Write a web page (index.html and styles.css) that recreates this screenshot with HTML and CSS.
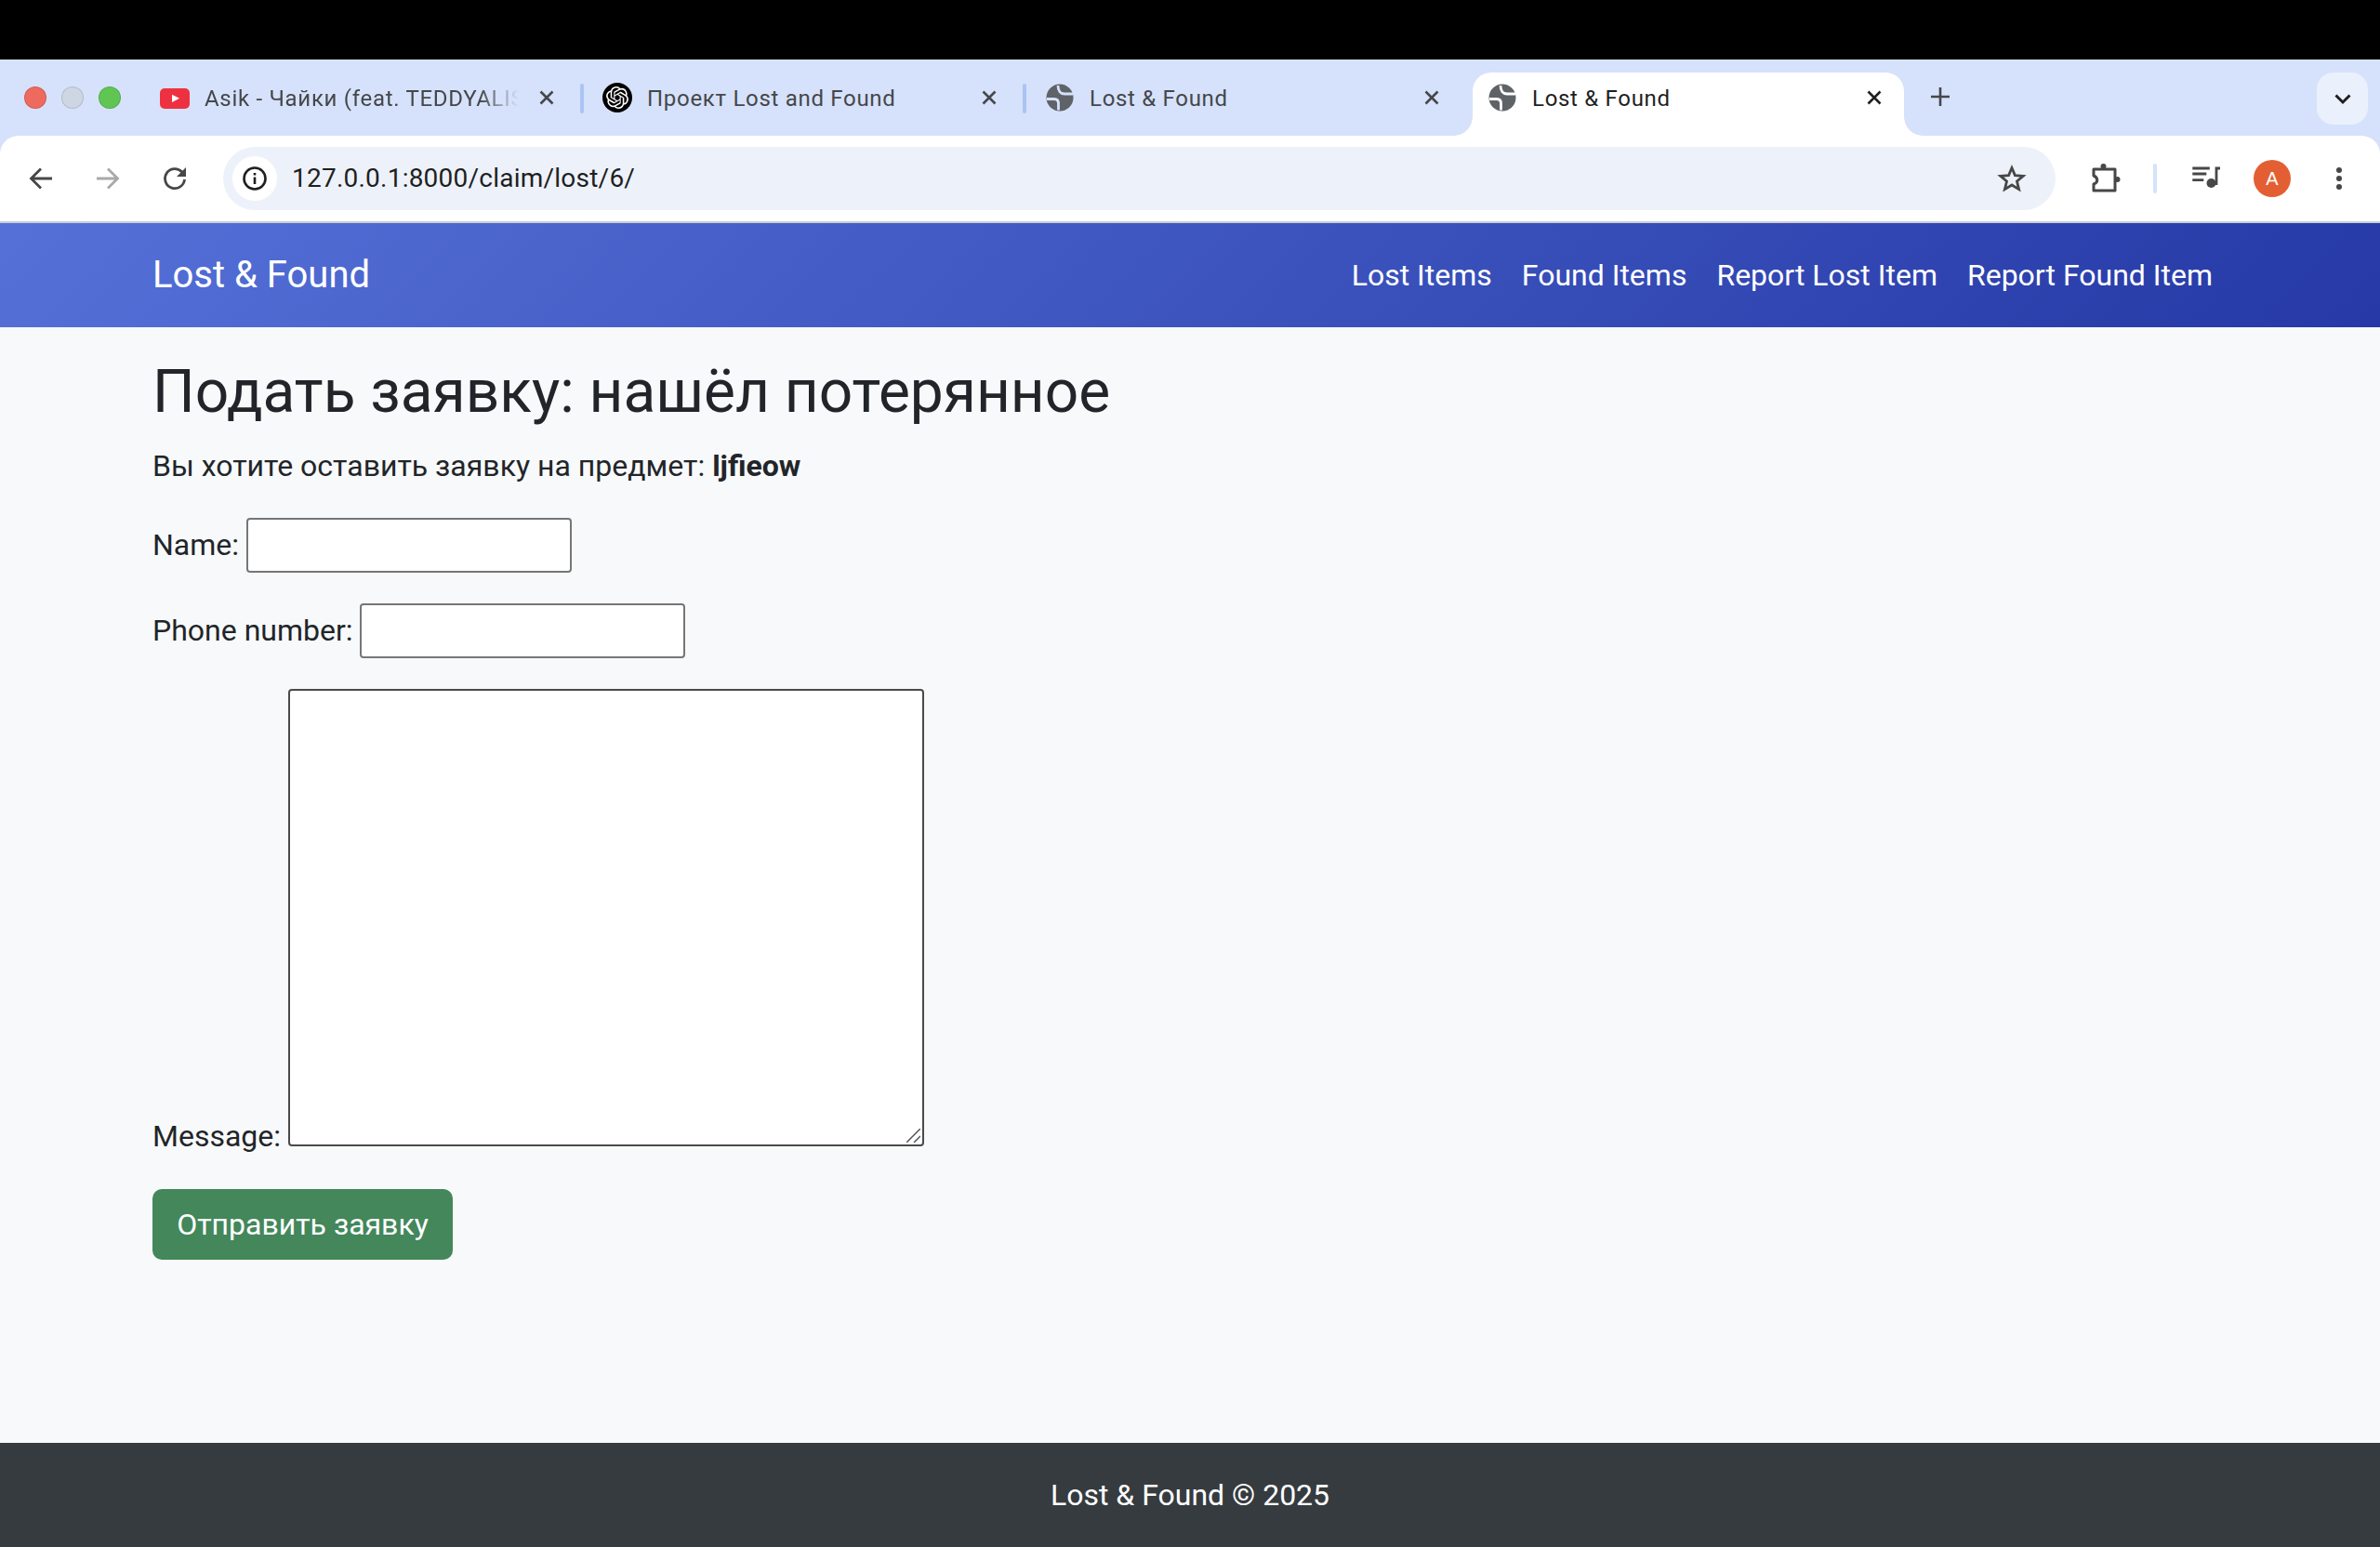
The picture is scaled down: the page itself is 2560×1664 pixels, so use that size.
FILE: index.html
```html
<!DOCTYPE html>
<html>
<head>
  <title>Lost &amp; Found</title>
  <link rel="stylesheet" href="styles.css">
</head>
<body>
  <div class="top-black"></div>

  <div class="browser">
    <!-- Browser tab strip -->
    <div class="tabstrip">
      <div class="traffic">
        <span class="light light-red"></span>
        <span class="light light-grey"></span>
        <span class="light light-green"></span>
      </div>
      <div class="tab">
        <svg class="favicon" viewBox="0 0 32 32"><rect x="0" y="6" width="32" height="22" rx="5" fill="#ee3140"/><path d="M13 12.700v8.300l8-4.150z" fill="#fff"/></svg>
        <span class="tab-title tab-title-fade">Asik - Чайки (feat. TEDDYALIS</span>
        <svg class="tab-close" viewBox="0 0 32 32"><path d="M9.500 9.500l13 13M22.500 9.500l-13 13"/></svg>
      </div>
      <span class="tab-sep"></span>
      <div class="tab">
        <svg class="favicon" viewBox="0 0 32 32">
          <circle cx="16" cy="16" r="16" fill="#000"/>
          <path transform="translate(4 4)" fill="#fff" d="M22.2819 9.8211a5.9847 5.9847 0 0 0-.5157-4.9108 6.0462 6.0462 0 0 0-6.5098-2.9A6.0651 6.0651 0 0 0 4.9807 4.1818a5.9847 5.9847 0 0 0-3.9977 2.9 6.0462 6.0462 0 0 0 .7427 7.0966 5.98 5.98 0 0 0 .511 4.9107 6.051 6.051 0 0 0 6.5146 2.9001A5.9847 5.9847 0 0 0 13.2599 24a6.0557 6.0557 0 0 0 5.7718-4.2058 5.9894 5.9894 0 0 0 3.9977-2.9001 6.0557 6.0557 0 0 0-.7475-7.0729zm-9.022 12.6081a4.4755 4.4755 0 0 1-2.8764-1.0408l.1419-.0804 4.7783-2.7582a.7948.7948 0 0 0 .3927-.6813v-6.7369l2.02 1.1686a.071.071 0 0 1 .038.052v5.5826a4.504 4.504 0 0 1-4.4945 4.4944zm-9.6607-4.1254a4.4708 4.4708 0 0 1-.5346-3.0137l.142.0852 4.783 2.7582a.7712.7712 0 0 0 .7806 0l5.8428-3.3685v2.3324a.0804.0804 0 0 1-.0332.0615L9.74 19.9502a4.4992 4.4992 0 0 1-6.1408-1.6464zM2.3408 7.8956a4.485 4.485 0 0 1 2.3655-1.9728V11.6a.7664.7664 0 0 0 .3879.6765l5.8144 3.3543-2.0201 1.1685a.0757.0757 0 0 1-.071 0l-4.8303-2.7865A4.504 4.504 0 0 1 2.3408 7.872zm16.5963 3.8558L13.1038 8.364 15.1192 7.2a.0757.0757 0 0 1 .071 0l4.8303 2.7913a4.4944 4.4944 0 0 1-.6765 8.1042v-5.6772a.79.79 0 0 0-.407-.667zm2.0107-3.0231l-.142-.0852-4.7735-2.7818a.7759.7759 0 0 0-.7854 0L9.409 9.2297V6.8974a.0662.0662 0 0 1 .0284-.0615l4.8303-2.7866a4.4992 4.4992 0 0 1 6.6802 4.66zM8.3065 12.863l-2.02-1.1638a.0804.0804 0 0 1-.038-.0567V6.0742a4.4992 4.4992 0 0 1 7.3757-3.4537l-.142.0805L8.704 5.459a.7948.7948 0 0 0-.3927.6813zm1.0976-2.3654l2.602-1.4998 2.6069 1.4998v2.9994l-2.5974 1.4997-2.6067-1.4997Z"/>
        </svg>
        <span class="tab-title">Проект Lost and Found</span>
        <svg class="tab-close" viewBox="0 0 32 32"><path d="M9.500 9.500l13 13M22.500 9.500l-13 13"/></svg>
      </div>
      <span class="tab-sep"></span>
      <div class="tab">
        <svg class="favicon" viewBox="0 0 32 32"><use href="#globe"/></svg>
        <span class="tab-title">Lost &amp; Found</span>
        <svg class="tab-close" viewBox="0 0 32 32"><path d="M9.500 9.500l13 13M22.500 9.500l-13 13"/></svg>
      </div>
      <span class="tab-gap"></span>
      <div class="tab tab-active">
        <svg class="favicon" viewBox="0 0 32 32"><use href="#globe"/></svg>
        <span class="tab-title">Lost &amp; Found</span>
        <svg class="tab-close" viewBox="0 0 32 32"><path d="M9.500 9.500l13 13M22.500 9.500l-13 13"/></svg>
      </div>
      <svg class="new-tab" viewBox="0 0 32 32"><path d="M16 6v20M6 16h20"/></svg>
      <div class="tab-search">
        <svg viewBox="0 0 24 24"><path d="M4.500 8.500l7.500 7.500 7.500-7.500"/></svg>
      </div>
    </div>

    <!-- Browser toolbar -->
    <div class="toolbar">
      <button class="tool"><svg viewBox="0 0 32 32"><path d="M28 16H5.500M16 5.500 5.500 16 16 26.500"/></svg></button>
      <button class="tool tool-off"><svg viewBox="0 0 32 32"><path d="M4 16h22.500M16 5.500 26.500 16 16 26.500"/></svg></button>
      <button class="tool"><svg viewBox="0 0 32 32"><path d="M26.500 17a10.500 10.500 0 1 1-3-8.300l3 3"/><path d="M28 4v10H18z" class="dot"/></svg></button>
      <div class="omnibox">
        <span class="info">
          <svg viewBox="0 0 28 28"><circle cx="14" cy="14" r="11.500"/><path d="M14 12.500V20M14 8v2.500"/></svg>
        </span>
        <span class="url">127.0.0.1:8000/claim/lost/6/</span>
        <svg class="star" viewBox="0 0 32 32"><path d="M16 4.500l3.400 8.100 8.800.7-6.700 5.700 2.100 8.600-7.600-4.600-7.600 4.600 2.100-8.600-6.700-5.700 8.800-.7z"/></svg>
      </div>
      <button class="tool"><svg viewBox="0 0 32 32"><path d="M3 6H26V29H3V22C8 20.500 8 15 3 13Z" class="joined"/><circle cx="13.500" cy="3" r="3" class="dot"/><circle cx="28.500" cy="17" r="3" class="dot"/></svg></button>
      <span class="tool-sep"></span>
      <button class="tool">
        <svg viewBox="0 0 32 32"><path d="M2.300 5h18.500M2.300 11h15M2.300 17.700h12"/><path d="M28 23V5h4"/><circle cx="22.500" cy="21" r="5" class="dot"/></svg>
      </button>
      <button class="tool"><span class="avatar">A</span></button>
      <button class="tool"><svg viewBox="0 0 32 32"><circle cx="16" cy="7" r="3" class="dot"/><circle cx="16" cy="16" r="3" class="dot"/><circle cx="16" cy="25" r="3" class="dot"/></svg></button>
    </div>
  </div>

  <!-- Site navbar -->
  <nav class="navbar">
    <div class="container nav-row">
      <a class="brand">Lost &amp; Found</a>
      <div class="nav-links">
        <a>Lost Items</a>
        <a>Found Items</a>
        <a>Report Lost Item</a>
        <a>Report Found Item</a>
      </div>
    </div>
  </nav>

  <main class="container main">
    <h2>Подать заявку: нашёл потерянное</h2>
    <p>Вы хотите оставить заявку на предмет: <strong>ljfieow</strong></p>
    <form>
      <p><label>Name:</label> <input type="text"></p>
      <p><label>Phone number:</label> <input type="text"></p>
      <p>
        <label>Message:</label>
        <span class="textarea-wrap">
          <textarea></textarea>
          <svg class="grip" viewBox="0 0 15 15"><path d="M0 15 15 0M8 15l7-7"/></svg>
        </span>
      </p>
      <button type="button" class="btn-send">Отправить заявку</button>
    </form>
  </main>

  <footer class="footer">Lost &amp; Found © 2025</footer>

  <!-- shared globe favicon -->
  <svg class="defs" width="0" height="0">
    <symbol id="globe" viewBox="0 0 32 32">
      <circle cx="16" cy="16" r="14.500" fill="#5f6368"/>
      <path d="M14 3c0 6 3 9 7 9h9M2 17.500h8c3 0 4.500 2 4.500 5v7" fill="none" stroke="currentColor" stroke-width="2.800"/>
    </symbol>
  </svg>
</body>
</html>
```

FILE: styles.css
```css
* {
  box-sizing: border-box;
}

html,
body {
  height: 100%;
}

body {
  margin: 0;
  min-height: 1664px;
  display: flex;
  flex-direction: column;
  background-color: #f8f9fa;
  color: #212529;
  font-family: Roboto, "Liberation Sans", sans-serif;
  font-size: 32px;
  line-height: 48px;
}

.top-black {
  height: 64px;
  background-color: #000;
}

.browser {
  background-color: #d6e2fb;
}

/* tab strip */
.tabstrip {
  height: 82px;
  display: flex;
  align-items: flex-start;
  padding-top: 14px;
}

.traffic {
  width: 156px;
  height: 54px;
  display: flex;
  align-items: center;
  gap: 16px;
  padding-left: 26px;
}

.light {
  width: 24px;
  height: 24px;
  border-radius: 50%;
  border: 1px solid rgba(0, 0, 0, 0.12);
}

.light-red {
  background-color: #ee6a5f;
}

.light-grey {
  background-color: #ced5e3;
}

.light-green {
  background-color: #61c554;
}

.tab {
  position: relative;
  width: 464px;
  height: 68px;
  flex: none;
  display: flex;
  align-items: flex-start;
  padding: 11px 16px 0;
  color: #45474a;
  font-size: 24px;
  line-height: 35px;
  letter-spacing: 0.7px;
}

.tab-active {
  background-color: #fff;
  border-radius: 20px 20px 0 0;
  color: #1f1f1f;
}

.tab-active::before,
.tab-active::after {
  content: "";
  position: absolute;
  bottom: 0;
  width: 20px;
  height: 20px;
}

.tab-active::before {
  left: -20px;
  background: radial-gradient(circle at 0 0, transparent 19.500px, #fff 20px);
}

.tab-active::after {
  right: -20px;
  background: radial-gradient(circle at 100% 0, transparent 19.500px, #fff 20px);
}

.favicon {
  width: 32px;
  height: 32px;
  flex: none;
  color: #d6e2fb;
}

.tab-active .favicon {
  color: #fff;
}

.tab-title {
  flex: 1;
  margin: 0 16px;
  white-space: nowrap;
}

.tab-title-fade {
  margin-right: 0;
  -webkit-mask-image: linear-gradient(to right, #000 296px, transparent 338px);
  mask-image: linear-gradient(to right, #000 296px, transparent 338px);
}

.tab-close {
  width: 32px;
  height: 32px;
  flex: none;
  fill: none;
  stroke: #45474a;
  stroke-width: 2.600;
}

.tab-active .tab-close {
  stroke: #1f1f1f;
}

.tab-sep {
  width: 4px;
  height: 32px;
  flex: none;
  margin: 12px 4px 0;
  border-radius: 2px;
  background-color: #aac4f3;
}

.tab-gap {
  width: 12px;
  flex: none;
}

.new-tab {
  width: 32px;
  height: 32px;
  flex: none;
  margin: 10px 0 0 23px;
  fill: none;
  stroke: #45474a;
  stroke-width: 2.600;
}

.tab-search {
  width: 55px;
  height: 56px;
  flex: none;
  margin-left: auto;
  margin-right: 13px;
  display: flex;
  align-items: center;
  justify-content: center;
  border-radius: 18px;
  background-color: #ebf1fc;
}

.tab-search svg {
  width: 24px;
  height: 24px;
  fill: none;
  stroke: #1f1f1f;
  stroke-width: 3;
}

/* toolbar */
.toolbar {
  height: 92px;
  display: flex;
  align-items: center;
  padding: 0 8px;
  background-color: #fff;
  border-radius: 20px 20px 0 0;
}

.tool {
  width: 72px;
  height: 72px;
  flex: none;
  padding: 0;
  border: 0;
  background: none;
  display: flex;
  align-items: center;
  justify-content: center;
}

.tool svg {
  width: 32px;
  height: 32px;
  fill: none;
  stroke: #474747;
  stroke-width: 2.800;
}

.tool-off svg {
  stroke: #a9a9a9;
}

.tool .joined {
  stroke-linejoin: round;
  stroke-width: 3;
}

.tool .dot {
  fill: #474747;
  stroke: none;
}

.omnibox {
  flex: 1;
  height: 68px;
  margin-left: 16px;
  margin-right: 18px;
  display: flex;
  align-items: center;
  padding: 0 31px 0 10px;
  border-radius: 34px;
  background-color: #edf2fa;
}

.info {
  width: 48px;
  height: 48px;
  display: flex;
  align-items: center;
  justify-content: center;
  border-radius: 50%;
  background-color: #fff;
}

.info svg {
  width: 28px;
  height: 28px;
  fill: none;
  stroke: #1f1f1f;
  stroke-width: 2.600;
}

.url {
  flex: 1;
  margin-left: 16px;
  color: #1f1f1f;
  font-size: 28px;
  letter-spacing: 0.23px;
}

.star {
  width: 32px;
  height: 32px;
  fill: none;
  stroke: #474747;
  stroke-width: 2.800;
}

.tool-sep {
  width: 4px;
  height: 32px;
  flex: none;
  margin: 0 16px 0 15px;
  border-radius: 2px;
  background-color: #d6e2fb;
}

.avatar {
  width: 40px;
  height: 40px;
  display: flex;
  align-items: center;
  justify-content: center;
  border-radius: 50%;
  background-color: #e35f33;
  color: #fff;
  font-size: 20px;
  line-height: 40px;
}

.defs {
  position: absolute;
}

/* site */
.container {
  width: 2280px;
  margin: 0 auto;
  padding: 0 24px;
}

.navbar {
  height: 114px;
  flex: none;
  display: flex;
  align-items: center;
  border-top: 2px solid #c9ced6;
  background: linear-gradient(135deg, #5571d8 0%, #2639a6 100%);
  color: #fff;
}

.nav-row {
  display: flex;
  align-items: center;
  justify-content: space-between;
}

.brand {
  font-size: 40px;
  line-height: 60px;
}

.nav-links {
  display: flex;
}

.nav-links a {
  padding: 0 16px;
}

.main {
  flex: 1;
  padding-top: 31px;
}

h2 {
  margin: 0 0 17px;
  font-size: 64px;
  font-weight: 400;
  line-height: 77px;
}

p {
  margin: 0 0 32px;
}

form p {
  margin-bottom: 33px;
}

strong {
  font-weight: 700;
}

input,
textarea {
  margin: 0;
  padding: 2px 4px;
  border: 2px solid #767676;
  border-radius: 4px;
  background-color: #fff;
  font-family: Roboto, sans-serif;
  font-size: 26px;
}

input {
  width: 350px;
  height: 59px;
  vertical-align: 1px;
}

.textarea-wrap {
  position: relative;
  display: inline-block;
}

textarea {
  display: block;
  width: 684px;
  height: 492px;
  border-color: #4a4a4a;
  resize: none;
}

.grip {
  position: absolute;
  right: 4px;
  bottom: 4px;
  width: 15px;
  height: 15px;
  fill: none;
  stroke: #555;
  stroke-width: 1.500;
}

.btn-send {
  display: block;
  width: 323px;
  height: 76px;
  padding: 12px 24px;
  border: 0;
  border-radius: 10px;
  background-color: #43875b;
  color: #fff;
  font-family: Roboto, sans-serif;
  font-size: 32px;
  line-height: 48px;
}

.footer {
  height: 112px;
  flex: none;
  display: flex;
  align-items: center;
  justify-content: center;
  background-color: #363b3f;
  color: #fff;
}
```
